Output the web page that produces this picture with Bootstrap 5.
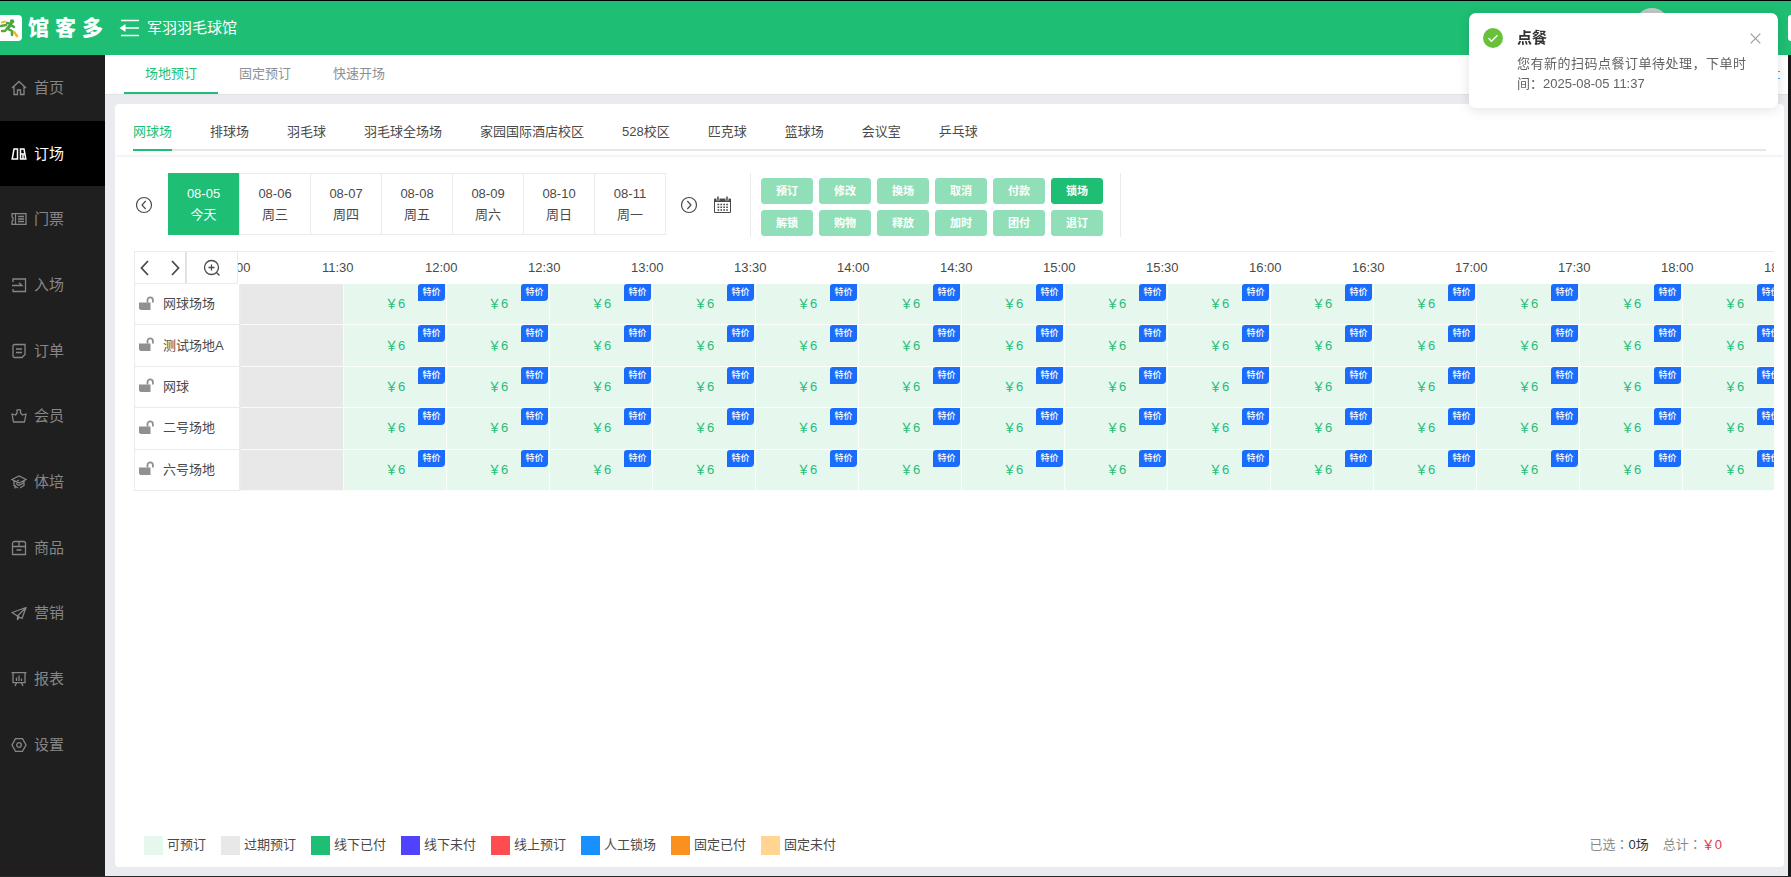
<!DOCTYPE html>
<html lang="zh-CN">
<head>
<meta charset="utf-8">
<meta name="viewport" content="width=device-width, initial-scale=1">
<title>馆客多 - 场地预订</title>
<link href="https://cdn.jsdelivr.net/npm/bootstrap@5.3.0/dist/css/bootstrap.min.css" rel="stylesheet">
<style>
:root { --brand: #1ebe74; --line: #ebebed; }
body { font-family: "Liberation Sans", "Noto Sans CJK SC", sans-serif; font-size: 13px; line-height: 20px; color: #4a4a4a; min-height: 100vh; border-top: 1px solid #000; border-bottom: 1px solid #262b29; background: #161616; overflow-x: hidden; }
svg { display: block; flex: none; }
button { color: inherit; }
a { text-decoration: none; color: inherit; }
.icon-button { border: 0; background: none; padding: 0; color: #4a4a4a; }

.topbar { height: 54px; background: var(--brand); color: #fff; overflow: hidden; }
.logo-box { width: 22px; height: 26px; background: #fff; border-radius: 0 4px 4px 0; }
.logo-name { font-size: 21px; font-weight: 900; gap: 6px; margin-left: 6px; line-height: 26px; }
.venue { font-size: 15px; margin-left: 7px; }
.avatar { width: 34px; height: 34px; background: #c3c8c6; margin-right: 119px; margin-bottom: 7px; }
.edge-button { width: 3px; height: 26px; background: #fff; border-radius: 4px 0 0 4px; }

.sidebar { width: 105px; background: #1f1f1f; color: #868686; font-size: 15px; }
.sidebar a { flex: 2 1 0; gap: 7px; padding-left: 11px; }
.sidebar a.active { background: #000; color: #fff; }
.sidebar-rest { flex: 3 1 0; }
.sidebar svg { width: 16px; height: 16px; fill: none; stroke: currentColor; stroke-width: 1.3; }

.workspace { background: #e9ebee; margin-right: 3px; min-width: 0; }
.page-tabs { height: 40px; background: #fff; border-bottom: 1px solid #dfe2e6; padding-left: 19px; color: #8d9096; }
.page-tabs a { padding: 9px 21px 0; border-bottom: 2px solid transparent; }
.page-tabs a.active { color: var(--brand); border-color: var(--brand); }
.more-link { color: #3aa9f5; padding-right: 8px; }

.board { margin: 9px 4px 9px 10px; background: #fff; border-radius: 4px; }
.court-tabs { height: 47px; margin: 0 18px; gap: 38px; box-shadow: inset 0 -2px #e4e6eb; }
.court-tabs a { padding-top: 18px; border-bottom: 2px solid transparent; white-space: nowrap; }
.court-tabs a.active { color: var(--brand); border-color: var(--brand); }
.panel { margin: 4px 1px 0; border-top: 2px solid #f3f4f6; padding: 16px 9px 12px 18px; }

.date-row { padding-left: 1px; }
.date-strip { margin: 0 14px 0 15px; border: 1px solid var(--line); height: 62px; }
.date-strip button { border: 0; border-left: 1px solid var(--line); width: 71px; background: #fff; padding: 0; line-height: 21px; }
.date-strip button:first-child { border-left: 0; }
.date-strip button.active { background: var(--brand); color: #fff; margin: -1px 0 -1px -1px; }
.actions { margin-left: 19px; padding: 5px 17px 1px 10px; border: solid var(--line); border-width: 0 1px; display: grid; grid-template-columns: repeat(6, 52px); gap: 6px; }
.actions .btn { --bs-btn-bg: var(--brand); --bs-btn-border-color: var(--brand); --bs-btn-color: #fff; --bs-btn-disabled-bg: #90dfb8; --bs-btn-disabled-border-color: #90dfb8; --bs-btn-disabled-color: #fff; --bs-btn-disabled-opacity: 1; --bs-btn-padding-x: 0; --bs-btn-padding-y: 0; --bs-btn-border-radius: 3px; font-size: 11px; font-weight: 700; line-height: 24px; height: 26px; }

.schedule-wrap { overflow: hidden; margin-top: 14px; border-top: 1px solid var(--line); }
.schedule { table-layout: fixed; border-collapse: separate; border-spacing: 0; width: calc(100% + 115px); height: 239px; }
.schedule th, .schedule td { padding: 0; font-weight: 400; vertical-align: middle; }
.schedule .name-col { width: 107px; }
.schedule thead th { height: 32px; }
.schedule thead .tools { position: sticky; left: 0; z-index: 1; }
.tool-row { width: 104px; height: 32px; background: #fff; border: 1px solid var(--line); border-top: 0; }
.page-tools { width: 52px; border-right: 2px solid #e2e2e5; padding: 0 5px; }
.time-label { margin-left: -22px; }
.schedule tbody th { height: 41px; border: solid var(--line); border-width: 0 2px 1px 1px; }
.court-name { gap: 9px; padding-left: 4px; white-space: nowrap; }
.slot { position: relative; background: #e6f8ee; border: solid #fafffc; border-width: 0 1px 1px 0; text-align: center; color: #27bd7a; }
.slot.past { background: #e8e8e8; border-color: #fafafa; }
.slot.beyond { background: #fff; }
.price-tag { position: absolute; top: 0; right: 1px; width: 27px; height: 17px; line-height: 17px; font-size: 9px; font-weight: 500; color: #fff; background: #1b6cfb; border-radius: 3px 0 4px 0; white-space: nowrap; }

.legend { gap: 15px; padding-left: 10px; }
.legend li { gap: 4px; }
.swatch { width: 19px; height: 19px; }
.totals { font-family: "Liberation Sans", "Noto Sans CJK TC", sans-serif; color: #8b8b8b; gap: 14px; margin-right: 52px; }
.totals .count { color: #333; }
.totals .sum { color: #e8343a; }

.notice { position: fixed; top: 13px; right: 13px; width: 309px; background: #fff; border-radius: 7px; padding: 15px 32px 14px 14px; gap: 14px; box-shadow: 0 2px 12px rgba(0,0,0,.12); z-index: 10; }
.notice h2 { font-size: 15px; line-height: 20px; font-weight: 700; color: #333; margin: 0 0 6px; }
.notice p { text-align: justify; margin: 0; color: #606266; width: 229px; }
.notice-close { position: absolute; top: 20px; right: 17px; }
</style>
</head>
<body class="d-flex flex-column">

<header class="topbar d-flex align-items-center">
  <div class="logo-box d-flex align-items-center">
    <svg width="20" height="22" viewBox="0 0 20 22" fill="none" stroke-linecap="round" stroke-linejoin="round">
      <path d="M1 9l5-1M9 9l-4 5H2" stroke="#5aa83c" stroke-width="2.500"/><path d="M7 6l4 1-3 5 4 2v4M11 8l3 2" stroke="#4aa53c" stroke-width="2.500"/>
      <circle cx="12" cy="4.500" r="2.200" fill="#4aa53c"/><path d="M14 15l3 4" stroke="#f2b428" stroke-width="2.500"/><path d="M2 5.500l3-1" stroke="#f2b428" stroke-width="2"/>
    </svg>
  </div>
  <div class="logo-name d-flex"><span>馆</span><span>客</span><span>多</span></div>
  <button class="icon-button text-white ms-3" type="button" aria-label="收起菜单">
    <svg width="21" height="18" viewBox="0 0 21 18" fill="none" stroke="#fff" stroke-width="1.600"><path d="M2 1.500h18M5 9h15M2 16.500h18"/><path d="M0.500 9l6-4v8z" fill="#fff" stroke="none"/></svg>
  </button>
  <span class="venue">军羽羽毛球馆</span>
  <span class="avatar rounded-circle ms-auto"></span>
  <span class="edge-button"></span>
</header>

<div class="d-flex flex-grow-1">
  <nav class="sidebar d-flex flex-column flex-shrink-0" aria-label="主菜单">
    <a href="#" class="d-flex align-items-center"><svg viewBox="0 0 16 16"><path d="M1 8l7-6.500L15 8M3 6.500v8h3.500V10h3v4.500H13v-8"/></svg>首页</a>
    <a href="#" class="d-flex align-items-center active"><svg viewBox="0 0 16 16"><path d="M3 3h3.500v10H1.200zM6.500 3v10" stroke-width="1.500"/><path d="M9.500 3H13l1.800 10H9.500zM9.500 8h4.500M12 8v5" stroke-width="1.500"/></svg>订场</a>
    <a href="#" class="d-flex align-items-center"><svg viewBox="0 0 16 16"><path d="M1 2.700h14v10.600H1v-3l1-1V7L1 6zM4.500 3v10M7 5.500h6M7 8h6M7 10.500h6"/></svg>门票</a>
    <a href="#" class="d-flex align-items-center"><svg viewBox="0 0 16 16"><path d="M2 5V2h12.500v12.500H2V12M1 8.500h10L8 5.800"/></svg>入场</a>
    <a href="#" class="d-flex align-items-center"><svg viewBox="0 0 16 16"><path d="M3.500 1.500H14v10l-3 3H3.500a1.500 1.500 0 0 1-1.500-1.500V3a1.500 1.500 0 0 1 1.500-1.500zM5 6h6M5 9.500h6"/></svg>订单</a>
    <a href="#" class="d-flex align-items-center"><svg viewBox="0 0 16 16"><path d="M1 6l3.500 1L6 5V1.800h3.500V5l2 2L15 6l-1.500 8h-11z" stroke-linejoin="round"/></svg>会员</a>
    <a href="#" class="d-flex align-items-center"><svg viewBox="0 0 16 16"><path d="M1 5.500L8 2l7 3.500L8 9zM3 7v4.500l4 2.500M13 7v4.500L9 14M5 9.500l3 2 5-3M4 11v3.500M8 6l-3 2"/></svg>体培</a>
    <a href="#" class="d-flex align-items-center"><svg viewBox="0 0 16 16"><path d="M1.500 6.500v-3a2 2 0 0 1 2-2h9a2 2 0 0 1 2 2v3zM1.500 6.500H14.500V14.500H1.500zM8 1.500v5M5.500 10h5" stroke-linejoin="round"/></svg>商品</a>
    <a href="#" class="d-flex align-items-center"><svg viewBox="0 0 16 16"><path d="M1 7.500l14-5-4 11-4.500-2.500zM15 2.500L6.500 11v3.500L8.500 12" stroke-linejoin="round"/></svg>营销</a>
    <a href="#" class="d-flex align-items-center"><svg viewBox="0 0 16 16"><path d="M.5 1.700h15M2 1.700v10h12v-10M5.500 12l-1.500 3M10.500 12l1.500 3M5.500 6.500V10M8 4.500V10M10.500 7.500V10"/></svg>报表</a>
    <a href="#" class="d-flex align-items-center"><svg viewBox="0 0 16 16"><path d="M4.500 1.700h7L15 8l-3.500 6.300h-7L1 8z"/><circle cx="8" cy="8" r="2.300"/></svg>设置</a>
    <div class="sidebar-rest"></div>
  </nav>

  <main class="workspace flex-grow-1 d-flex flex-column">
    <nav class="page-tabs d-flex align-items-stretch" aria-label="预订方式">
      <a href="#" class="active">场地预订</a><a href="#">固定预订</a><a href="#">快速开场</a>
      <span class="more-link ms-auto d-flex align-items-center"><svg width="10" height="10" viewBox="0 0 10 10" stroke="currentColor"><path d="M1 1.500h9M1 8.500h9"/></svg></span>
    </nav>

    <section class="board flex-grow-1 d-flex flex-column">
      <nav class="court-tabs d-flex" aria-label="场地类型">
        <a href="#" class="active">网球场</a><a href="#">排球场</a><a href="#">羽毛球</a><a href="#">羽毛球全场场</a><a href="#">家园国际酒店校区</a><a href="#">528校区</a><a href="#">匹克球</a><a href="#">篮球场</a><a href="#">会议室</a><a href="#">乒乓球</a>
      </nav>

      <div class="panel flex-grow-1 d-flex flex-column">
        <div class="date-row d-flex">
          <button class="icon-button" type="button" aria-label="前几天"><svg width="18" height="18" viewBox="0 0 18 18" fill="none" stroke="currentColor" stroke-width="1.200"><circle cx="9" cy="9" r="7.500"/><path d="M10.700 5L7 9l3.700 4"/></svg></button>
          <div class="date-strip d-flex">
            <button type="button" class="active">08-05<br>今天</button><button type="button">08-06<br>周三</button><button type="button">08-07<br>周四</button><button type="button">08-08<br>周五</button><button type="button">08-09<br>周六</button><button type="button">08-10<br>周日</button><button type="button">08-11<br>周一</button>
          </div>
          <button class="icon-button" type="button" aria-label="后几天"><svg width="18" height="18" viewBox="0 0 18 18" fill="none" stroke="currentColor" stroke-width="1.200"><circle cx="9" cy="9" r="7.500"/><path d="M7.300 5L11 9l-3.700 4"/></svg></button>
          <button class="icon-button ms-3" type="button" aria-label="选择日期"><svg width="17" height="18" viewBox="0 0 17 18" fill="none" stroke="currentColor"><path d="M.5 3h16v13.500H.5z"/><path d="M.5 4.500h16" stroke-width="3"/><path d="M4 .5v4M13 .5v4" stroke="#fff" stroke-width="3"/><path d="M4 .5v4M13 .5v4" stroke-width="1.500"/><path d="M3.500 8.500h11M3.500 11.200h11M3.500 13.900h11" stroke-width="1.500" stroke-dasharray="1.700 1.200"/></svg></button>
          <div class="actions">
            <button class="btn" type="button" disabled>预订</button><button class="btn" type="button" disabled>修改</button><button class="btn" type="button" disabled>换场</button><button class="btn" type="button" disabled>取消</button><button class="btn" type="button" disabled>付款</button><button class="btn" type="button">锁场</button>
            <button class="btn" type="button" disabled>解锁</button><button class="btn" type="button" disabled>购物</button><button class="btn" type="button" disabled>释放</button><button class="btn" type="button" disabled>加时</button><button class="btn" type="button" disabled>团付</button><button class="btn" type="button" disabled>退订</button>
          </div>
        </div>

        <div class="schedule-wrap">
          <table class="schedule">
            <thead><tr id="times">
              <th class="name-col tools">
                <div class="tool-row d-flex">
                  <div class="page-tools d-flex align-items-center justify-content-between">
                    <button class="icon-button" type="button" aria-label="向前"><svg width="9" height="16" viewBox="0 0 9 16" fill="none" stroke="currentColor" stroke-width="1.800"><path d="M8 1L1.500 8 8 15"/></svg></button>
                    <button class="icon-button" type="button" aria-label="向后"><svg width="9" height="16" viewBox="0 0 9 16" fill="none" stroke="currentColor" stroke-width="1.800"><path d="M1 1l6.500 7L1 15"/></svg></button>
                  </div>
                  <button class="icon-button flex-grow-1 d-flex align-items-center justify-content-center" type="button" aria-label="放大"><svg width="18" height="18" viewBox="0 0 18 18" fill="none" stroke="currentColor" stroke-width="1.300"><circle cx="8.500" cy="8.500" r="7"/><path d="M13.500 13.500l3 3M5.500 8.500h6M8.500 5.500v6"/></svg></button>
                </div>
              </th>
            </tr></thead>
            <tbody id="courts"></tbody>
          </table>
        </div>

        <footer class="d-flex align-items-center justify-content-between mt-auto">
          <ul class="legend list-unstyled d-flex mb-0" id="legend"></ul>
          <div class="totals d-flex" lang="zh-TW"><span>已选：<span class="count">0场</span></span><span>总计：<span class="sum">￥0</span></span></div>
        </footer>
      </div>
    </section>
  </main>
</div>

<aside class="notice d-flex align-items-start" role="alert">
  <svg width="20" height="20" viewBox="0 0 20 20"><circle cx="10" cy="10" r="10" fill="#67c23a"/><path d="M5.500 10.300l3 3 6-6" fill="none" stroke="#fff" stroke-width="1.500"/></svg>
  <div class="flex-shrink-0"><h2>点餐</h2><p>您有新的扫码点餐订单待处理，下单时间：2025-08-05 11:37</p></div>
  <button class="icon-button notice-close" type="button" aria-label="关闭"><svg width="11" height="11" viewBox="0 0 11 11" stroke="#999ca1" stroke-width="1.200"><path d="M.7.7l9.600 9.600M10.300.7L.7 10.300"/></svg></button>
</aside>

<script>
const times = ['11:00','11:30','12:00','12:30','13:00','13:30','14:00','14:30','15:00','15:30','16:00','16:30','17:00','17:30','18:00','18:30'];
const courts = ['网球场场','测试场地A','网球','二号场地','六号场地'];
const states = [['可预订','#e6f8ee'],['过期预订','#e8e8e8'],['线下已付','#1ebe74'],['线下未付','#5142ff'],['线上预订','#ff4d4f'],['人工锁场','#1890ff'],['固定已付','#fa911e'],['固定未付','#ffd591']];
const lock = '<svg width="15" height="17" viewBox="0 0 15 17"><path d="M0 6.500h11.500V14H1.500L0 12.500z" fill="#8f9092"/><path d="M8.500 6.500V4a2.700 2.700 0 0 1 5.400 0v2.500" fill="none" stroke="#8f9092" stroke-width="1.800"/></svg>';

document.getElementById('times').insertAdjacentHTML('beforeend',
  times.map(t => `<th scope="col"><span class="time-label">${t}</span></th>`).join(''));

const slot = i => i === 0 ? '<td class="slot past"></td>'
  : i === times.length - 1 ? '<td class="slot beyond"></td>'
  : '<td class="slot">￥6<span class="price-tag">特价</span></td>';
document.getElementById('courts').innerHTML = courts.map(name =>
  `<tr><th scope="row"><div class="court-name d-flex align-items-center">${lock}${name}</div></th>${times.map((t, i) => slot(i)).join('')}</tr>`).join('');

document.getElementById('legend').innerHTML = states.map(([label, color]) =>
  `<li class="d-flex align-items-center"><span class="swatch" style="background:${color}"></span>${label}</li>`).join('');
</script>
<script src="https://cdn.jsdelivr.net/npm/bootstrap@5.3.0/dist/js/bootstrap.bundle.min.js"></script>
</body>
</html>
